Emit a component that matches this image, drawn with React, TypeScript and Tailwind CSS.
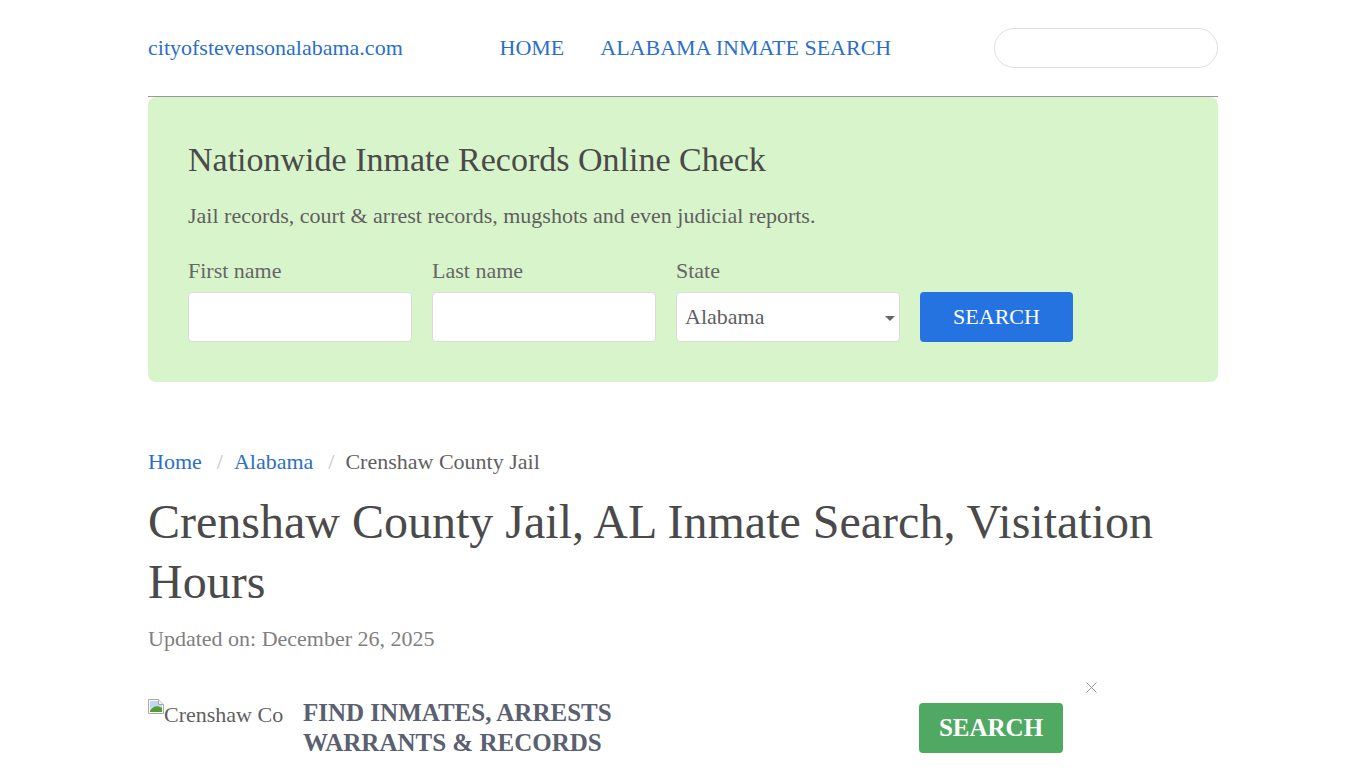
import React from 'react'

const App: React.FC = () => {
  return (
    <div className="h-[768px] overflow-hidden bg-white font-['Liberation_Serif',serif] text-[#4a4a4a]">
      <div className="mx-auto w-[1070px]">
        {/* Header */}
        <header className="flex h-[97px] items-center border-b border-[#999999] pb-[2px]">
          <a href="#" className="w-[351.5px] text-[22px] text-[#2a6fc9]">cityofstevensonalabama.com</a>
          <nav className="flex flex-1 gap-[36px] text-[22px] text-[#2a6fc9]">
            <a href="#">HOME</a>
            <a href="#">ALABAMA INMATE SEARCH</a>
          </nav>
          <input type="text" className="mt-[2px] h-[40px] w-[224px] rounded-full border border-[#dfdfdf] bg-white" />
        </header>

        {/* Search box */}
        <section className="h-[285px] rounded-[8px] bg-[#d8f4cb] px-[40px] pt-[40px]">
          <h3 className="text-[34px] leading-[46px] text-[#4a4a4a]">Nationwide Inmate Records Online Check</h3>
          <p className="mt-[20px] text-[22px] leading-[26px] text-[#5f5f5f]">Jail records, court &amp; arrest records, mugshots and even judicial reports.</p>
          <div className="mt-[29px] flex items-end gap-[20px]">
            <label className="block w-[224px]">
              <span className="block text-[22px] leading-[26px] text-[#666666]">First name</span>
              <input type="text" className="mt-[8px] block h-[50px] w-full rounded-[4px] border border-[#dbdbdb] bg-white" />
            </label>
            <label className="block w-[224px]">
              <span className="block text-[22px] leading-[26px] text-[#666666]">Last name</span>
              <input type="text" className="mt-[8px] block h-[50px] w-full rounded-[4px] border border-[#dbdbdb] bg-white" />
            </label>
            <label className="block w-[224px]">
              <span className="block text-[22px] leading-[26px] text-[#666666]">State</span>
              <div className="relative mt-[8px] flex h-[50px] w-full items-center rounded-[4px] border border-[#dbdbdb] bg-white pb-[2px] pl-[8px] text-[22px] text-[#5f5f5f]">
                Alabama
                <span className="absolute right-[4px] top-[23px] h-0 w-0 border-x-[5px] border-t-[5px] border-x-transparent border-t-[#666666]" />
              </div>
            </label>
            <button className="h-[50px] w-[153px] rounded-[4px] bg-[#2573e0] pb-[2px] text-[22px] text-white">SEARCH</button>
          </div>
        </section>

        {/* Breadcrumb */}
        <nav className="mt-[66px] flex text-[22px] leading-[28px] text-[#5f5f5f]">
          <a href="#" className="text-[#2a6fc9]">Home</a>
          <span className="pl-[15px] pr-[11px] text-[#c4c4c4]">/</span>
          <a href="#" className="text-[#2a6fc9]">Alabama</a>
          <span className="pl-[15px] pr-[11px] text-[#c4c4c4]">/</span>
          <span>Crenshaw County Jail</span>
        </nav>

        {/* Title */}
        <h1 className="mt-[16px] text-[48px] leading-[60px] text-[#4a4a4a]">Crenshaw County Jail, AL Inmate Search, Visitation Hours</h1>
        <p className="mt-[13px] text-[22px] leading-[28px] text-[#808080]">Updated on: December 26, 2025</p>

        {/* Ad */}
        <div className="relative mt-[45px] flex">
          <div className="flex w-[136px] items-start text-[22px] text-[#5f5f5f]">
            <svg width="16" height="17" viewBox="0 0 16 17" className="mt-[1px] shrink-0">
              <path d="M.5.5h10l5 5v9H.5z" fill="#fff" stroke="#a8a8a8" />
              <path d="M2 2h8v4h4v6H2z" fill="#c4d5f5" />
              <path d="M2 13v-1c3-5 7-6 12-3v4z" fill="#4f9e33" />
              <path d="M10.5.5v5h5" fill="#f2f2f2" stroke="#a8a8a8" />
            </svg>
            <span className="whitespace-nowrap">Crenshaw Co</span>
          </div>
          <p className="ml-[19px] w-[400px] text-[25px] font-bold leading-[30px] text-[#5a6070]">FIND INMATES, ARRESTS WARRANTS &amp; RECORDS</p>
          <button className="ml-[216px] mt-[5px] h-[50px] w-[144px] rounded-[4px] bg-[#50a963] text-[25px] font-bold text-white">SEARCH</button>
          <svg width="11" height="11" viewBox="0 0 11 11" className="absolute left-[938px] top-[-16px]">
            <path d="M.5.5l10 10M10.5.5l-10 10" stroke="#999999" strokeWidth="1" fill="none" />
          </svg>
        </div>
      </div>
    </div>
  )
}

export default App
